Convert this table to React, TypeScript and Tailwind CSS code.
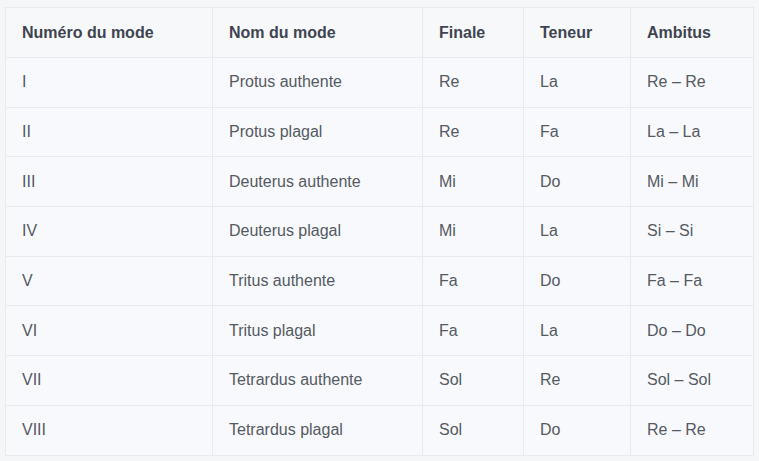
const rows = [
  ["I", "Protus authente", "Re", "La", "Re – Re"],
  ["II", "Protus plagal", "Re", "Fa", "La – La"],
  ["III", "Deuterus authente", "Mi", "Do", "Mi – Mi"],
  ["IV", "Deuterus plagal", "Mi", "La", "Si – Si"],
  ["V", "Tritus authente", "Fa", "Do", "Fa – Fa"],
  ["VI", "Tritus plagal", "Fa", "La", "Do – Do"],
  ["VII", "Tetrardus authente", "Sol", "Re", "Sol – Sol"],
  ["VIII", "Tetrardus plagal", "Sol", "Do", "Re – Re"],
];

const headers = ["Numéro du mode", "Nom du mode", "Finale", "Teneur", "Ambitus"];
const widths = ["w-[207px]", "w-[210px]", "w-[101px]", "w-[107px]", "w-[123px]"];

export default function App() {
  return (
    <div className="min-h-screen bg-[#f5f6f8] px-[5px] pt-[7px] font-['Liberation_Sans',Arial,sans-serif]">
      <table className="w-[748px] table-fixed border-collapse bg-[#f8f9fc]">
        <thead>
          <tr className="bg-[#f7f8fa]">
            {headers.map((h, i) => (
              <th
                key={h}
                className={`${widths[i]} h-[50px] border border-[#e8eaee] pl-[16px] pr-[15px] text-left text-base font-bold text-[#3f4550]`}
              >
                {h}
              </th>
            ))}
          </tr>
        </thead>
        <tbody>
          {rows.map((r) => (
            <tr key={r[0]}>
              {r.map((c, i) => (
                <td
                  key={i}
                  className="h-[49.7px] border border-[#e8eaee] pl-[16px] pr-[15px] text-base text-[#555a62]"
                >
                  {c}
                </td>
              ))}
            </tr>
          ))}
        </tbody>
      </table>
    </div>
  );
}
